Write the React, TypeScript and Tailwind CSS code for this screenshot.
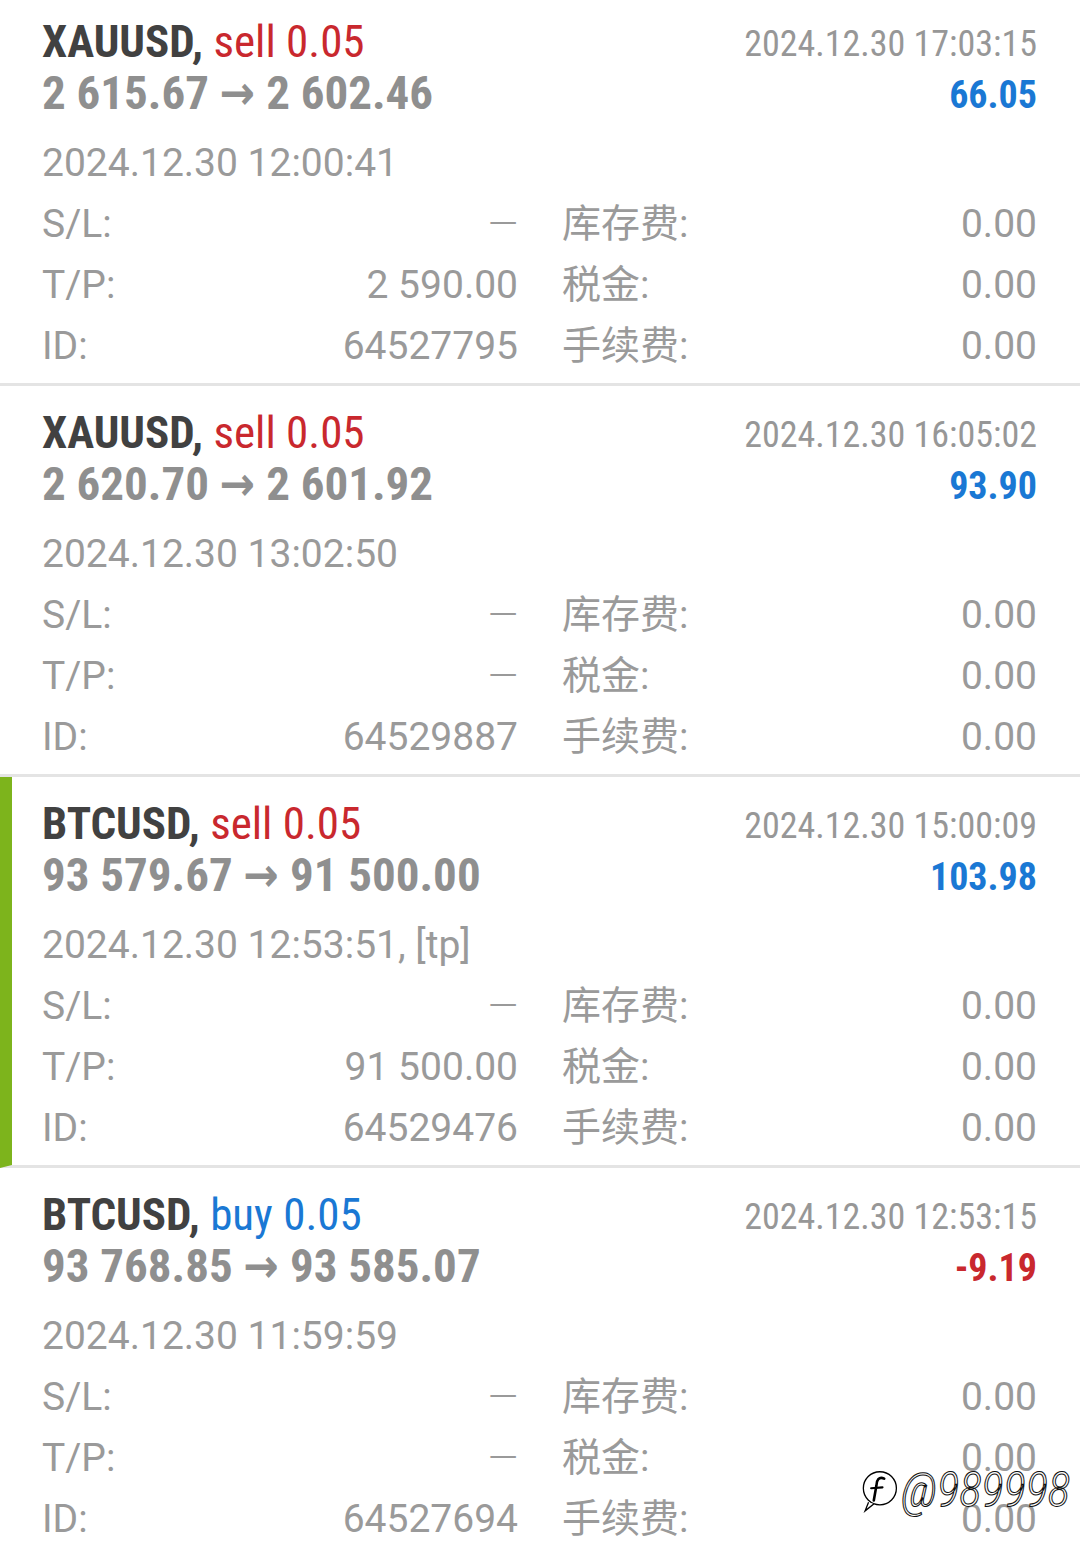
import React from 'react'

const COND = "font-['Roboto_Condensed','Liberation_Sans_Narrow','DejaVu_Sans_Condensed',sans-serif]"
const BODY = "font-['Roboto','Noto_Sans_CJK_SC',sans-serif]"

type Deal = {
  symbol: string
  side: 'sell' | 'buy'
  volume: string
  open: string
  close: string
  openTime: string
  closeTime: string
  profit: string
  sl: string
  tp: string
  id: string
  marked?: boolean
}

const DASH = '—'

const DEALS: Deal[] = [
  { symbol: 'XAUUSD', side: 'sell', volume: '0.05', open: '2 615.67', close: '2 602.46', openTime: '2024.12.30 12:00:41', closeTime: '2024.12.30 17:03:15', profit: '66.05', sl: DASH, tp: '2 590.00', id: '64527795' },
  { symbol: 'XAUUSD', side: 'sell', volume: '0.05', open: '2 620.70', close: '2 601.92', openTime: '2024.12.30 13:02:50', closeTime: '2024.12.30 16:05:02', profit: '93.90', sl: DASH, tp: DASH, id: '64529887' },
  { symbol: 'BTCUSD', side: 'sell', volume: '0.05', open: '93 579.67', close: '91 500.00', openTime: '2024.12.30 12:53:51, [tp]', closeTime: '2024.12.30 15:00:09', profit: '103.98', sl: DASH, tp: '91 500.00', id: '64529476', marked: true },
  { symbol: 'BTCUSD', side: 'buy', volume: '0.05', open: '93 768.85', close: '93 585.07', openTime: '2024.12.30 11:59:59', closeTime: '2024.12.30 12:53:15', profit: '-9.19', sl: DASH, tp: DASH, id: '64527694' },
]

function Row({ label, value, label2, value2 }: { label: string; value: string; label2: string; value2: string }) {
  return (
    <div className="flex h-[61px] items-center text-[39px] leading-[61px] text-[#9a9a9a]">
      <div className="flex w-[476px] justify-between">
        <span>{label}</span>
        <span className={value === DASH ? 'font-light' : ''}>{value}</span>
      </div>
      <div className="ml-[44px] flex flex-1 justify-between">
        <span>{label2}</span>
        <span>{value2}</span>
      </div>
    </div>
  )
}

function DealCard({ deal, first }: { deal: Deal; first?: boolean }) {
  const negative = deal.profit.startsWith('-')
  return (
    <div
      className={`border-b-[3px] border-[#e4e4e4] bg-white pr-[43px] ${first ? 'pt-[16px]' : 'pt-[21px]'} pb-[6px] ${
        deal.marked ? 'border-l-[12px] border-l-[#7db41c] pl-[30px]' : 'pl-[42px]'
      }`}
    >
      <div className="flex h-[102px] justify-between">
        <div className={COND}>
          <div className="text-[45px] leading-[51px] whitespace-nowrap">
            <span className="font-bold text-[#414141]">{deal.symbol},</span>{' '}
            <span className={deal.side === 'sell' ? 'text-[#c9282e]' : 'text-[#1a78d4]'}>
              {deal.side} {deal.volume}
            </span>
          </div>
          <div className="text-[47px] leading-[51px] font-bold text-[#8f8f8f] whitespace-nowrap">
            {deal.open} → {deal.close}
          </div>
        </div>
        <div className={`${COND} flex flex-col items-end pt-[3px]`}>
          <div className="text-[36px] leading-[51px] text-[#979797]">{deal.closeTime}</div>
          <div className={`text-[38px] leading-[51px] font-bold ${negative ? 'text-[#c9282e]' : 'text-[#1a78d4]'}`}>
            {deal.profit}
          </div>
        </div>
      </div>
      <div className={`${BODY} mt-[15px]`}>
        <div className="h-[61px] text-[39px] leading-[61px] text-[#9a9a9a]">{deal.openTime}</div>
        <Row label="S/L:" value={deal.sl} label2="库存费:" value2="0.00" />
        <Row label="T/P:" value={deal.tp} label2="税金:" value2="0.00" />
        <Row label="ID:" value={deal.id} label2="手续费:" value2="0.00" />
      </div>
    </div>
  )
}

function Watermark() {
  return (
    <div className="absolute right-[10px] top-[1464px] flex items-center gap-[2px]">
      <svg width="40" height="50" viewBox="0 0 46 52" fill="none">
        <circle cx="24" cy="24" r="19" fill="white" stroke="black" strokeWidth="1.5" />
        <path d="M11 40 L7 50 L17 42" fill="white" stroke="black" strokeWidth="1.5" />
        <path d="M29 13 C23 10 20 15 20 21 L17 38" stroke="black" strokeWidth="3" strokeLinecap="round" fill="none" />
        <path d="M14 24 L27 23" stroke="black" strokeWidth="2.5" strokeLinecap="round" />
      </svg>
      <span
        className="font-['Roboto_Condensed','DejaVu_Sans_Condensed',sans-serif] text-[47px] leading-[52px] font-light italic text-white"
        style={{ WebkitTextStroke: '1px #111' }}
      >
        @989998
      </span>
    </div>
  )
}

export default function App() {
  return (
    <div className="relative h-[1550px] w-[1080px] overflow-hidden bg-white">
      {DEALS.map((d, i) => (
        <DealCard key={d.id} deal={d} first={i === 0} />
      ))}
      <Watermark />
    </div>
  )
}
